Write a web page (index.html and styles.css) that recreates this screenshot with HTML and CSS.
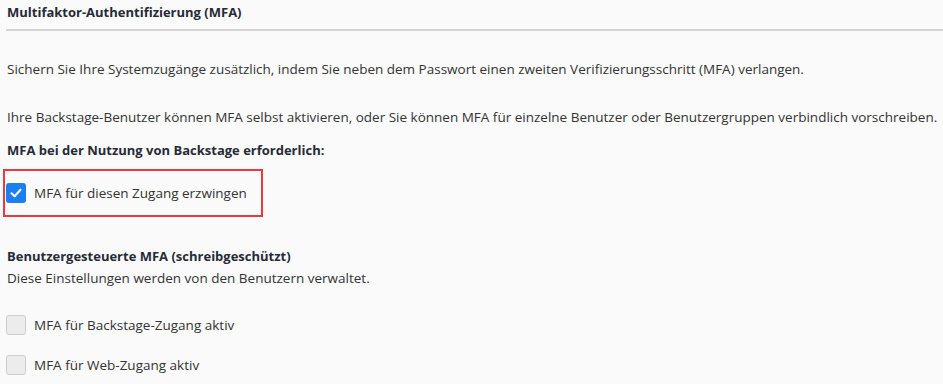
FILE: index.html
```html
<!DOCTYPE html>
<html lang="de">
<head>
<meta charset="utf-8">
<link rel="stylesheet" href="styles.css">
</head>
<body>
<div class="page">
  <h2 class="title">Multifaktor-Authentifizierung (MFA)</h2>
  <p class="p1">Sichern Sie Ihre Systemzugänge zusätzlich, indem Sie neben dem Passwort einen zweiten Verifizierungsschritt (MFA) verlangen.</p>
  <p class="p2">Ihre Backstage-Benutzer können MFA selbst aktivieren, oder Sie können MFA für einzelne Benutzer oder Benutzergruppen verbindlich vorschreiben.</p>
  <h3 class="sub">MFA bei der Nutzung von Backstage erforderlich:</h3>
  <div class="highlight">
    <label class="check">
      <span class="box checked"><svg width="14" height="14" viewBox="0 0 14 14"><path d="M2.5 7.2 L5.6 10.2 L11.5 3.8" fill="none" stroke="#fff" stroke-width="2" stroke-linecap="round" stroke-linejoin="round"/></svg></span>
      <span>MFA für diesen Zugang erzwingen</span>
    </label>
  </div>
  <h3 class="sub sub2">Benutzergesteuerte MFA (schreibgeschützt)</h3>
  <p class="p3">Diese Einstellungen werden von den Benutzern verwaltet.</p>
  <label class="check c1"><span class="box disabled"></span><span>MFA für Backstage-Zugang aktiv</span></label>
  <label class="check c2"><span class="box disabled"></span><span>MFA für Web-Zugang aktiv</span></label>
</div>
</body>
</html>
```
FILE: styles.css
```css
html, body { margin: 0; padding: 0; background: #fafafa; }
body { font-family: "Open Sans", "Noto Sans", sans-serif; font-size: 13.5px; color: #333; }
.page { padding: 0 0 0 6px; overflow: hidden; height: 384px; white-space: nowrap; }
.title { margin: 0; padding: 3px 0 0 1px; font-size: 13px; font-weight: 700; color: #262b36; line-height: 19px; height: 26px; border-bottom: 2px solid #d3d3d3; }
p { margin: 0; padding-left: 1px; line-height: 20px; }
.p1 { margin-top: 28px; }
.p2 { margin-top: 28px; }
.sub { margin: 13px 0 0; padding-left: 1px; font-size: 13px; font-weight: 700; color: #262b36; line-height: 20px; }
.highlight { margin: 9px 0 0 -3px; width: 255px; height: 44px; border: 2px solid #f0363f; display: flex; align-items: center; padding-left: 1px; }
.check { display: flex; align-items: center; gap: 8px; height: 20px; }
.box { width: 20px; height: 20px; box-sizing: border-box; border-radius: 3px; display: flex; align-items: center; justify-content: center; flex: none; }
.box.checked { background: #1b7ff2; }
.box.disabled { background: #ececec; border: 1px solid #cdcdcd; }
.sub2 { margin-top: 29px; }
.p3 { margin-top: 2px; }
.c1 { margin-top: 27px; }
.c2 { margin-top: 20px; }
```
